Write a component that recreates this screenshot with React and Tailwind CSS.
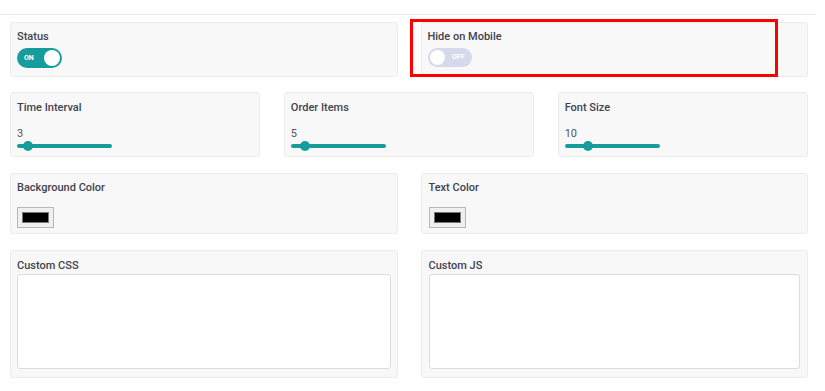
function Card({ children, className = "" }) {
  return (
    <div className={`relative bg-[#f8f8f8] border border-[#ececec] rounded-[3px] ${className}`}>
      {children}
    </div>
  );
}

function Label({ children }) {
  return (
    <div className="text-[11px] leading-[14px] font-medium text-[#3f4350]">
      {children}
    </div>
  );
}

function Toggle({ on }) {
  if (on) {
    return (
      <div className="relative w-[45px] h-[20px] rounded-full bg-[#179c9c] flex items-center">
        <span className="ml-[7px] text-[7px] font-bold text-white leading-none">ON</span>
        <span className="absolute right-[2px] top-[2px] w-[16px] h-[16px] rounded-full bg-white"></span>
      </div>
    );
  }
  return (
    <div className="relative w-[44px] h-[19px] rounded-full bg-[#d6d9eb] flex items-center justify-end">
      <span className="mr-[7px] text-[7px] font-bold text-white leading-none">OFF</span>
      <span className="absolute left-[2px] top-[2px] w-[15px] h-[15px] rounded-full bg-white"></span>
    </div>
  );
}

function Slider({ value, pos }) {
  return (
    <div>
      <div className="text-[11px] leading-[14px] text-[#555] mt-[12px]">{value}</div>
      <div className="relative w-[95px] h-[10px] flex items-center">
        <div className="w-full h-[4px] rounded-full bg-[#179c9c]"></div>
        <div
          className="absolute top-0 w-[10px] h-[10px] rounded-full bg-[#179c9c]"
          style={{ left: pos - 5 }}
        ></div>
      </div>
    </div>
  );
}

function Swatch() {
  return (
    <div className="mt-[12px] w-[37px] h-[21px] border border-[#b8b8b8] bg-[#efefef] p-[4px]">
      <div className="w-full h-full bg-black border border-[#777]"></div>
    </div>
  );
}

export default function App() {
  return (
    <div
      className="w-[825px] h-[391px] bg-white overflow-hidden"
      style={{ fontFamily: "Roboto, 'Liberation Sans', sans-serif" }}
    >
      <div className="mt-[14px] h-px w-[815px] bg-[#e6e6e6]"></div>

      <div className="w-[798px] ml-[10px] pt-[7px] flex flex-col">
        <div className="grid grid-cols-2 gap-[23px]">
          <Card className="h-[55px] pt-[7px] px-[6px]">
            <Label>Status</Label>
            <div className="mt-[4px]">
              <Toggle on />
            </div>
          </Card>
          <Card className="h-[55px] pt-[7px] px-[6px]">
            <Label>Hide on Mobile</Label>
            <div className="mt-[4px]">
              <Toggle on={false} />
            </div>
            <div className="absolute left-[-12px] top-[-4px] w-[368px] h-[58px] border-[3px] border-[#ff0000]"></div>
          </Card>
        </div>

        <div className="grid grid-cols-3 gap-[23.5px] mt-[15px]">
          <Card className="h-[65px] pt-[8px] px-[6px]">
            <Label>Time Interval</Label>
            <Slider value="3" pos={11} />
          </Card>
          <Card className="h-[65px] pt-[8px] px-[6px]">
            <Label>Order Items</Label>
            <Slider value="5" pos={14} />
          </Card>
          <Card className="h-[65px] pt-[8px] px-[6px]">
            <Label>Font Size</Label>
            <Slider value="10" pos={23} />
          </Card>
        </div>

        <div className="grid grid-cols-2 gap-[23px] mt-[16px]">
          <Card className="h-[61px] pt-[7px] px-[6px]">
            <Label>Background Color</Label>
            <Swatch />
          </Card>
          <Card className="h-[61px] pt-[7px] px-[7px]">
            <Label>Text Color</Label>
            <Swatch />
          </Card>
        </div>

        <div className="grid grid-cols-2 gap-[23px] mt-[16px]">
          <Card className="h-[128px] pt-[8px] px-[6px]">
            <Label>Custom CSS</Label>
            <textarea className="mt-[1px] w-full h-[95px] bg-white border border-[#dcdcdc] rounded-[3px] resize-none outline-none"></textarea>
          </Card>
          <Card className="h-[128px] pt-[8px] px-[7px]">
            <Label>Custom JS</Label>
            <textarea className="mt-[1px] w-full h-[95px] bg-white border border-[#dcdcdc] rounded-[3px] resize-none outline-none"></textarea>
          </Card>
        </div>
      </div>
    </div>
  );
}
